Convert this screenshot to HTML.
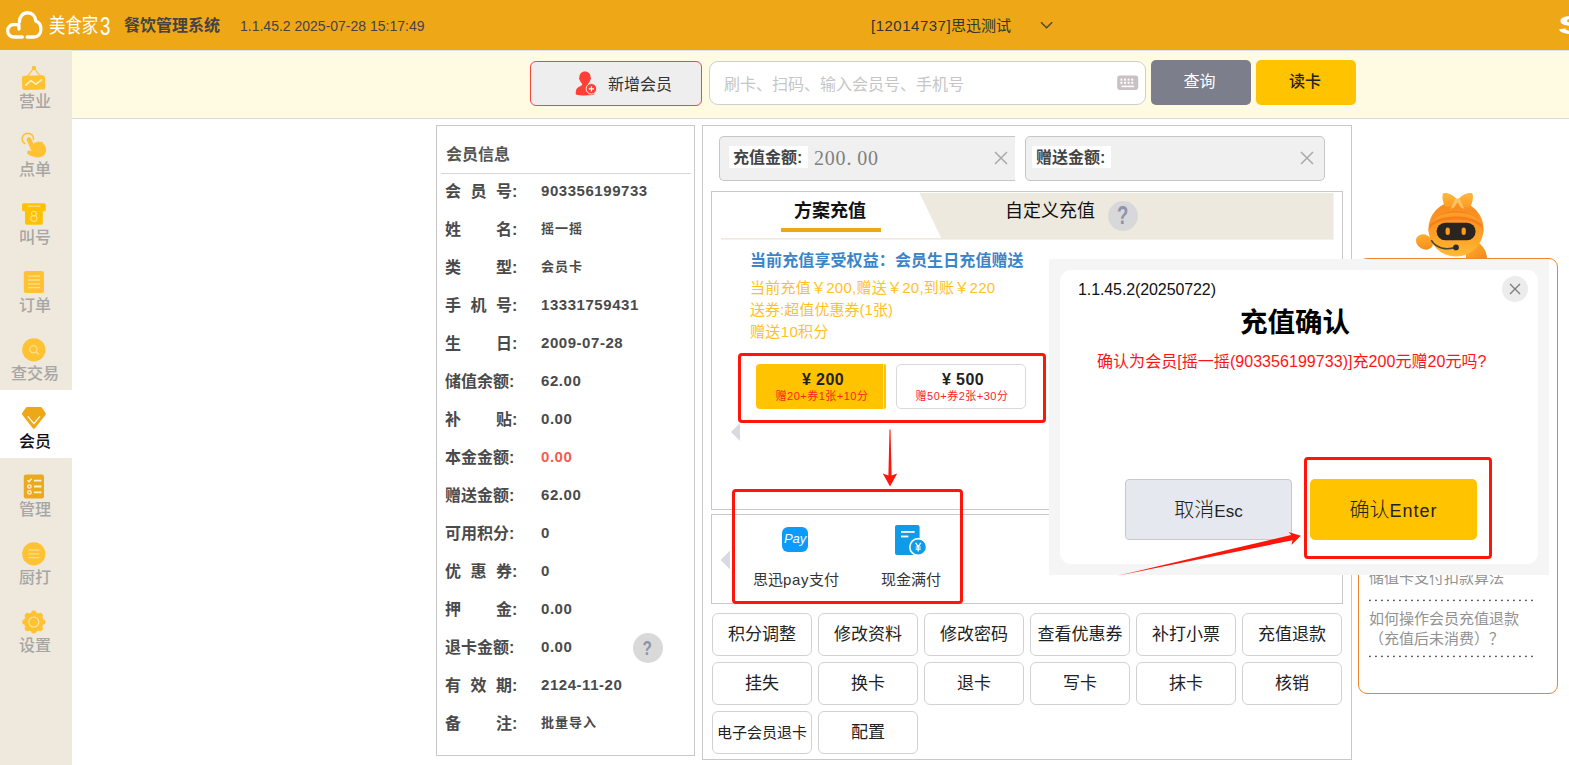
<!DOCTYPE html>
<html lang="zh-CN">
<head>
<meta charset="utf-8">
<title>美食家3 餐饮管理系统</title>
<style>
*{box-sizing:border-box;margin:0;padding:0}
html,body{width:1569px;height:765px;overflow:hidden;background:#fff}
body{position:relative;font-family:"Liberation Sans","Noto Sans CJK SC",sans-serif;color:#333;font-size:15px}
.abs{position:absolute}
.t{position:absolute;white-space:nowrap;line-height:1}
/* header */
#hdr{left:0;top:0;width:1569px;height:50px;background:#eea817}
/* sidebar */
#side{left:0;top:50px;width:72px;height:715px;background:#efe8dc}
.si{position:absolute;left:0;width:72px;height:68px}
.si .lb{position:absolute;left:0;width:70px;text-align:center;top:42px;font-size:16px;line-height:20px;color:#a6a6a6;font-weight:500}
.si.on{background:#fff}
.si.on .lb{color:#111;font-weight:500}
.si svg{position:absolute}
/* toolbar */
#tb{left:72px;top:50px;width:1497px;height:69px;background:#fffbe3;border-bottom:1px solid #d9d9d9}
/* member info */
#mi{left:436px;top:125px;width:259px;height:631px;border:1px solid #c9c9c9;background:#fff}
.ml{position:absolute;font-size:16px;font-weight:700;color:#4a4a4a;line-height:20px;white-space:nowrap}
.mv{position:absolute;letter-spacing:.55px;font-size:15px;font-weight:700;color:#4a4a4a;line-height:20px;white-space:nowrap}
.mv.s{font-size:13px;letter-spacing:1px}
.mv.r{color:#f55b52}
.jl{display:inline-flex;justify-content:space-between;width:67px;vertical-align:top}
/* right panel */
#rp{left:702px;top:125px;width:650px;height:635px;border:1px solid #c9c9c9;background:#fff}
.fb{position:absolute;width:100px;height:43px;border:1px solid #d2d2d2;border-radius:6px;background:#fff;text-align:center;line-height:41px;font-size:17px;color:#222;white-space:nowrap}
.yl{font-size:15px;line-height:20px;color:#ffc11f;letter-spacing:.25px}
.pm{text-align:center;font-size:16px;line-height:20px;font-weight:700;color:#222;letter-spacing:.4px}
.ps{text-align:center;font-size:11px;line-height:14px;color:#ff2222;letter-spacing:.5px}
.hp{font-size:15px;line-height:20px;color:#929292}
.dots{width:164px;height:1.4px;background:repeating-linear-gradient(90deg,#6a6a6a 0,#6a6a6a 1.2px,transparent 1.2px,transparent 5.45px)}
</style>
</head>
<body>
<div id="hdr" class="abs">
<svg class="abs" style="left:4px;top:9px" width="40.5" height="32" viewBox="0 0 42 32" preserveAspectRatio="none"><g fill="none" stroke="#fff" stroke-width="3.4" stroke-linecap="round" stroke-linejoin="round"><path d="M19 28 H10.5 C6.5 28 3.8 25.3 3.8 21.8 C3.8 18 6.8 15.3 11 15.6 L15.5 15.6 V20"/><path d="M16 13 C16 7.5 19.5 3.8 24.5 3.8 C29.3 3.8 32.6 7.2 32.9 12 C36.3 13.2 38.3 16.3 38.3 20 C38.3 24.6 35.2 28 30.6 28 H24"/></g></svg>
<div class="t" style="left:49px;top:14px;font-size:20.5px;line-height:24px;color:#fff;font-weight:400;transform:scaleX(.8);transform-origin:0 0">美食家</div>
<div class="t" style="left:99.5px;top:10.5px;font-size:26px;line-height:30px;color:#fff;transform:scaleX(.72);transform-origin:0 0">3</div>
<div class="t" style="left:124px;top:16px;font-size:16px;line-height:20px;color:#444;font-weight:700">餐饮管理系统</div>
<div class="t" style="left:240px;top:17px;font-size:14px;line-height:18px;color:#444">1.1.45.2 2025-07-28 15:17:49</div>
<div class="t" style="left:871px;top:16.5px;font-size:15px;line-height:18px;color:#333"><span style="letter-spacing:.5px">[12014737]</span>思迅测试</div>
<svg class="abs" style="left:1039px;top:20px" width="15" height="10" viewBox="0 0 15 10"><path d="M2 2.2 L7.6 7.8 L13.2 2.2" fill="none" stroke="#444" stroke-width="1.3"/></svg>
<div class="t" style="left:1557.5px;top:9.5px;font-size:26px;line-height:30px;color:#fff;font-weight:700;transform:scaleX(1.7);transform-origin:0 0">S</div>
</div>
<div id="side" class="abs">
<div class="si" style="top:0px"><svg style="left:20px;top:6px" width="28" height="36" viewBox="0 0 28 36"><path d="M13.9 12 L7.4 20.4 M13.9 12 L20.4 20.4" stroke="#ffc233" stroke-width="1.2" fill="none"/><circle cx="13.9" cy="12" r="2.2" fill="#ffc233"/><rect x="2" y="19.4" width="23.2" height="14.4" rx="2.6" fill="#ffc233" transform="rotate(-1.5 13.6 26.6)"/><path d="M5.3 29.6 L10.8 24.6 L15.9 28.2 L22.2 23.4" stroke="#fff0c4" stroke-width="1.5" fill="none" stroke-linejoin="round"/></svg><div class="lb">营业</div></div>
<div class="si" style="top:68px"><svg style="left:20px;top:14px" width="28" height="27" viewBox="0 0 28 27"><path d="M4.7 11.6 A5.6 5.6 0 1 1 13.4 7.4" stroke="#ffc233" stroke-width="1.5" fill="none" stroke-linecap="round"/><path d="M6.8 8.6 C6.2 6.4 7.6 5.2 9 5.3 C10.6 5.4 11.3 6.6 11.7 7.8 L13.6 12.2 C14 10.6 15.4 9.8 16.6 10.4 C17.2 9.2 19 9 19.8 10.2 C20.8 9.4 22.6 9.8 23 11.2 C25 12.6 26.2 15.4 26 18.6 C25.8 22.6 22.6 25.6 18.4 25.6 C14.4 25.6 11.6 24.2 8.2 22.6 C6.6 21.8 6.6 19.4 8.4 18.6 C9.6 18.2 10.6 18.6 11.6 19.2 Z" fill="#ffc233"/></svg><div class="lb">点单</div></div>
<div class="si" style="top:136px"><svg style="left:20px;top:16px" width="28" height="24" viewBox="0 0 28 24"><rect x="2" y="1.2" width="23.8" height="8" rx="1.8" fill="#ffc103"/><rect x="5" y="6" width="17.8" height="16.8" rx="1.8" fill="#ffc103"/><rect x="7.6" y="3.4" width="12.6" height="1.4" rx=".6" fill="#ffe08a"/><ellipse cx="13.9" cy="11.5" rx="2.5" ry="2.3" fill="none" stroke="#ffe08a" stroke-width="1.1"/><ellipse cx="13.9" cy="16.6" rx="3.1" ry="2.8" fill="none" stroke="#ffe08a" stroke-width="1.1"/></svg><div class="lb">叫号</div></div>
<div class="si" style="top:204px"><svg style="left:22px;top:16px" width="24" height="24" viewBox="0 0 24 24"><rect x="1.8" y="1" width="20.2" height="22" rx="2.2" fill="#ffc233"/><path d="M6 6.2 H18 M6 10 H18 M6 13.8 H18 M6 17.6 H18" stroke="#ffe08a" stroke-width="1.3"/></svg><div class="lb">订单</div></div>
<div class="si" style="top:272px"><svg style="left:21px;top:15px" width="26" height="26" viewBox="0 0 26 26"><circle cx="12.8" cy="12.8" r="11.6" fill="#ffc233"/><circle cx="12.4" cy="12.2" r="3.6" fill="none" stroke="#ffe08a" stroke-width="1.2"/><path d="M15.2 15 L17.6 17.4" stroke="#ffe08a" stroke-width="1.2" stroke-linecap="round"/></svg><div class="lb">查交易</div></div>
<div class="si on" style="top:340px"><svg style="left:20px;top:15px" width="28" height="26" viewBox="0 0 28 26"><path d="M7.2 2 H20.6 Q21.4 2 22 2.7 L25.6 8 Q26.2 9 25.4 9.9 L15 23.2 Q13.9 24.4 12.8 23.2 L2.4 9.9 Q1.6 9 2.2 8 L5.8 2.7 Q6.4 2 7.2 2 Z" fill="#eea817"/><path d="M7.8 11.4 L13.9 18.6 L20 11.4" fill="none" stroke="#fff" stroke-width="1.3"/></svg><div class="lb">会员</div></div>
<div class="si" style="top:408px"><svg style="left:22px;top:14.5px" width="24" height="26" viewBox="0 0 24 26"><rect x="1.8" y="1.4" width="20.2" height="24" rx="2.2" fill="#eba91f"/><path d="M5.4 7.2 L7 8.8 L9.6 5.8" fill="none" stroke="#fff3cf" stroke-width="1.4"/><path d="M11.9 7.6 H19.4 M11.9 13.5 H19.4 M11.9 19.4 H19.4" stroke="#fff3cf" stroke-width="1.9"/><circle cx="7.45" cy="13.5" r="1.7" fill="none" stroke="#fff3cf" stroke-width="1.3"/><circle cx="7.45" cy="19.4" r="1.7" fill="none" stroke="#fff3cf" stroke-width="1.3"/></svg><div class="lb">管理</div></div>
<div class="si" style="top:476px"><svg style="left:21px;top:15px" width="26" height="26" viewBox="0 0 26 26"><circle cx="12.8" cy="12.9" r="11.6" fill="#ffc233"/><path d="M7.2 9.2 H18.4 M7.2 12.9 H18.4 M7.2 16.6 H18.4" stroke="#ffe08a" stroke-width="1.3"/></svg><div class="lb">厨打</div></div>
<div class="si" style="top:544px"><svg style="left:20px;top:14px" width="28" height="28" viewBox="0 0 28 28"><g fill="#ffc233"><circle cx="13.8" cy="14" r="9.8"/><g id="gt"><rect x="11.2" y="2.4" width="5.2" height="5" rx="2"/><rect x="11.2" y="20.6" width="5.2" height="5" rx="2"/></g><use href="#gt" transform="rotate(45 13.8 14)"/><use href="#gt" transform="rotate(90 13.8 14)"/><use href="#gt" transform="rotate(135 13.8 14)"/></g><circle cx="13.8" cy="14" r="5" fill="none" stroke="#ffe9a8" stroke-width="1.1"/></svg><div class="lb">设置</div></div>
</div>
<div id="tb" class="abs">
<div class="abs" style="left:0;top:0;width:1497px;height:1px;background:#dfe1ea"></div>
<div class="abs" style="left:458px;top:11px;width:172px;height:45px;border:1px solid #f4473c;border-radius:6px;background:#eeeeee"></div>
<svg class="abs" style="left:502px;top:20px" width="26" height="27" viewBox="0 0 26 27"><path d="M11 1.6 C14.6 1.6 16.6 4 16.6 7.4 C17.2 7.6 17.2 9 16.4 9.6 C16 11.4 15.2 12.8 14.2 13.6 C14 14.6 14.4 15.2 15.4 15.6 C17.2 16.2 19 16.8 20 17.6 L20.4 24.6 C17 25.8 6 25.8 2.6 24.8 C1.8 24.6 1.6 24 1.7 23 C1.9 20 2.4 18.2 4.2 17.2 C5.6 16.4 7 16 7.8 15.2 C8.4 14.6 8.2 13.8 7.8 13.4 C6.8 12.6 6 11.2 5.6 9.6 C4.8 9 4.8 7.6 5.4 7.4 C5.4 4 7.4 1.6 11 1.6 Z" fill="#ff4036"/><circle cx="17.4" cy="18.8" r="5.3" fill="#ff4036" stroke="#eeeeee" stroke-width="1"/><path d="M17.4 16.2 V21.4 M14.8 18.8 H20" stroke="#fff" stroke-width="1.3"/></svg>
<div class="t" style="left:536px;top:24.5px;font-size:16px;line-height:20px;color:#333">新增会员</div>
<div class="abs" style="left:637px;top:11px;width:437px;height:44px;border:1px solid #cfcfcf;border-radius:9px;background:#fff"></div>
<div class="t" style="left:652px;top:24.5px;font-size:16px;line-height:20px;color:#c6c6c6">刷卡、扫码、输入会员号、手机号</div>
<svg class="abs" style="left:1044px;top:24px" width="24" height="18" viewBox="0 0 24 18"><rect x="1.2" y="1.6" width="21" height="14.4" rx="2.4" fill="#c9c1c4"/><g fill="#fff"><rect x="4.4" y="4.6" width="2" height="2"/><rect x="8" y="4.6" width="2" height="2"/><rect x="11.6" y="4.6" width="2" height="2"/><rect x="15.2" y="4.6" width="2" height="2"/><rect x="4.4" y="7.8" width="2" height="2"/><rect x="8" y="7.8" width="2" height="2"/><rect x="11.6" y="7.8" width="2" height="2"/><rect x="15.2" y="7.8" width="2" height="2"/><rect x="5.4" y="11.6" width="12.6" height="1.6"/></g></svg>
<div class="abs" style="left:1079px;top:10px;width:100px;height:45px;border-radius:5px;background:#7c7e8b;color:#fff;text-align:center;font-size:16px;line-height:43px;text-indent:-3px">查询</div>
<div class="abs" style="left:1184px;top:10px;width:100px;height:45px;border-radius:5px;background:#ffc300;color:#222;text-align:center;font-size:16px;line-height:43px;font-weight:500;text-indent:-2px">读卡</div>
</div>
<div id="mi" class="abs"></div>
<div class="ml" style="left:446px;top:145px;color:#555">会员信息</div>
<div class="abs" style="left:441px;top:173px;width:250px;height:1px;background:#d6d6d6"></div>
<div class="ml" style="left:445px;top:182px"><span class="jl"><span>会</span><span>员</span><span>号</span></span>:</div><div class="mv" style="left:541px;top:181px">903356199733</div>
<div class="ml" style="left:445px;top:220px"><span class="jl"><span>姓</span><span>名</span></span>:</div><div class="mv s" style="left:541px;top:219px">摇一摇</div>
<div class="ml" style="left:445px;top:258px"><span class="jl"><span>类</span><span>型</span></span>:</div><div class="mv s" style="left:541px;top:257px">会员卡</div>
<div class="ml" style="left:445px;top:296px"><span class="jl"><span>手</span><span>机</span><span>号</span></span>:</div><div class="mv" style="left:541px;top:295px">13331759431</div>
<div class="ml" style="left:445px;top:334px"><span class="jl"><span>生</span><span>日</span></span>:</div><div class="mv" style="left:541px;top:333px">2009-07-28</div>
<div class="ml" style="left:445px;top:372px">储值余额:</div><div class="mv" style="left:541px;top:371px">62.00</div>
<div class="ml" style="left:445px;top:410px"><span class="jl"><span>补</span><span>贴</span></span>:</div><div class="mv" style="left:541px;top:409px">0.00</div>
<div class="ml" style="left:445px;top:448px">本金金额:</div><div class="mv r" style="left:541px;top:447px">0.00</div>
<div class="ml" style="left:445px;top:486px">赠送金额:</div><div class="mv" style="left:541px;top:485px">62.00</div>
<div class="ml" style="left:445px;top:524px">可用积分:</div><div class="mv" style="left:541px;top:523px">0</div>
<div class="ml" style="left:445px;top:562px"><span class="jl"><span>优</span><span>惠</span><span>券</span></span>:</div><div class="mv" style="left:541px;top:561px">0</div>
<div class="ml" style="left:445px;top:600px"><span class="jl"><span>押</span><span>金</span></span>:</div><div class="mv" style="left:541px;top:599px">0.00</div>
<div class="ml" style="left:445px;top:638px">退卡金额:</div><div class="mv" style="left:541px;top:637px">0.00</div>
<div class="ml" style="left:445px;top:676px"><span class="jl"><span>有</span><span>效</span><span>期</span></span>:</div><div class="mv" style="left:541px;top:675px">2124-11-20</div>
<div class="ml" style="left:445px;top:714px"><span class="jl"><span>备</span><span>注</span></span>:</div><div class="mv s" style="left:541px;top:713px">批量导入</div>
<div class="abs" style="left:632.5px;top:632.5px;width:30px;height:30px;border-radius:15px;background:#d9d9d9;color:#8e92aa;font-weight:700;font-size:20px;line-height:31px;text-align:center"><span style="display:inline-block;transform:scaleX(.76)">?</span></div>
<div id="rp" class="abs"></div>
<div class="abs" style="left:719px;top:136px;width:296px;height:45px;border:1px solid #c6c6c6;border-right:none;border-radius:5px 0 0 5px;background:#f0f0f0"></div>
<div class="abs" style="left:729px;top:146px;width:79px;height:22px;background:#fff"></div>
<div class="t" style="left:733px;top:148px;font-size:16px;line-height:20px;font-weight:700;color:#444">充值金额:</div>
<div class="t" style="left:814px;top:146px;font-size:20px;line-height:24px;letter-spacing:.8px;color:#808080;font-family:'Liberation Serif','Noto Serif CJK SC',serif">200.<span style="margin-left:5px">00</span></div>
<svg class="abs" style="left:993px;top:150px" width="16" height="16" viewBox="0 0 16 16"><path d="M2 2 L14 14 M14 2 L2 14" stroke="#a9a9a9" stroke-width="1.5" fill="none"/></svg>
<div class="abs" style="left:1025px;top:136px;width:300px;height:45px;border:1px solid #c6c6c6;border-radius:5px;background:#f0f0f0"></div>
<div class="abs" style="left:1032px;top:146px;width:79px;height:22px;background:#fff"></div>
<div class="t" style="left:1036px;top:148px;font-size:16px;line-height:20px;font-weight:700;color:#444">赠送金额:</div>
<svg class="abs" style="left:1299px;top:150px" width="16" height="16" viewBox="0 0 16 16"><path d="M2 2 L14 14 M14 2 L2 14" stroke="#a9a9a9" stroke-width="1.5" fill="none"/></svg>
<div class="abs" style="left:711px;top:191px;width:632px;height:319px;border:1px solid #c9c9c9;background:#fff"></div>
<svg class="abs" style="left:712px;top:193px" width="622" height="47" viewBox="0 0 622 47"><path d="M207.5 0 H621.5 V45.5 H229.5 Z" fill="#eee9de"/><rect x="9" y="45" width="612.5" height="1.6" fill="#eee9de"/><rect x="69" y="35" width="100" height="4" fill="#eea817"/></svg>
<div class="t" style="left:794px;top:199px;font-size:18px;line-height:24px;font-weight:700;color:#111">方案充值</div>
<div class="t" style="left:1005px;top:199px;font-size:18px;line-height:24px;color:#111">自定义充值</div>
<div class="abs" style="left:1107.5px;top:200.5px;width:30px;height:30px;border-radius:15px;background:#d8d8db;color:#8f93ab;font-weight:700;font-size:25px;line-height:28px;text-align:center"><span style="display:inline-block;transform:scaleX(.74)">?</span></div>
<div class="t" style="left:750px;top:251px;font-size:16px;line-height:20px;font-weight:700;letter-spacing:.1px;color:#3a85c9">当前充值享受权益：会员生日充值赠送</div>
<div class="t yl" style="left:750px;top:278px">当前充值￥200,赠送￥20,到账￥220</div>
<div class="t yl" style="left:750px;top:300px;letter-spacing:.05px">送券:超值优惠券(1张)</div>
<div class="t yl" style="left:750px;top:322px;letter-spacing:.35px">赠送10积分</div>
<div class="abs" style="left:756px;top:364px;width:127px;height:45px;border-radius:4px 0 0 4px;background:#ffc300"></div>
<div class="abs" style="left:883px;top:364px;width:1px;height:45px;background:#ffe48a"></div>
<div class="abs" style="left:884px;top:364px;width:2px;height:45px;border-radius:0 3px 3px 0;background:#ffc300"></div>
<div class="abs" style="left:896px;top:364px;width:130px;height:45px;border:1px solid #d9d9d9;border-radius:5px;background:#fff"></div>
<div class="t pm" style="left:758px;top:370px;width:130px">¥ 200</div>
<div class="t ps" style="left:757px;top:389px;width:130px">赠20+券1张+10分</div>
<div class="t pm" style="left:898px;top:370px;width:130px">¥ 500</div>
<div class="t ps" style="left:897px;top:389px;width:130px">赠50+券2张+30分</div>
<svg class="abs" style="left:729px;top:421px" width="12" height="22" viewBox="0 0 12 22"><path d="M2 11 L11 2 V20 Z" fill="#d9dae1"/></svg>
<div class="abs" style="left:711px;top:514px;width:632px;height:90px;border:1px solid #c9c9c9;background:#fff"></div>
<svg class="abs" style="left:719px;top:548px" width="12" height="24" viewBox="0 0 12 24"><path d="M1.6 12 L11 2.4 V21.6 Z" fill="#d9dae1"/></svg>
<div class="abs" style="left:782px;top:527px;width:26px;height:25px;border-radius:6px;background:#0d9bfb"></div>
<div class="t" style="left:782px;top:531px;width:26px;text-align:center;font-size:13px;line-height:16px;color:#fff;font-style:italic;letter-spacing:-.1px">Pay</div>
<svg class="abs" style="left:893px;top:523px" width="36" height="34" viewBox="0 0 36 34"><path d="M4 2 H24.4 Q26.6 2 26.6 4.2 V32 H4 Q2 32 2 30 V4 Q2 2 4 2 Z" fill="#0e9be8"/><rect x="8" y="8" width="13.6" height="1.8" fill="#fff"/><rect x="8" y="12.6" width="7.4" height="1.8" fill="#fff"/><circle cx="25.2" cy="24" r="8.4" fill="#0e9be8" stroke="#fff" stroke-width="1.6"/><path d="M22.6 19.8 L25.2 23.6 L27.8 19.8 M25.2 23.6 V28.6 M22.6 24 H27.8 M22.6 26.2 H27.8" stroke="#fff" stroke-width="1.2" fill="none"/></svg>
<div class="t" style="left:746px;top:570px;width:100px;text-align:center;font-size:15px;line-height:20px;color:#333">思迅<span style="letter-spacing:.6px">pay</span>支付</div>
<div class="t" style="left:861px;top:570px;width:100px;text-align:center;font-size:15px;line-height:20px;color:#333">现金满付</div>
<div class="fb" style="left:712px;top:613px">积分调整</div>
<div class="fb" style="left:818px;top:613px">修改资料</div>
<div class="fb" style="left:924px;top:613px">修改密码</div>
<div class="fb" style="left:1030px;top:613px">查看优惠券</div>
<div class="fb" style="left:1136px;top:613px">补打小票</div>
<div class="fb" style="left:1242px;top:613px">充值退款</div>
<div class="fb" style="left:712px;top:662px">挂失</div>
<div class="fb" style="left:818px;top:662px">换卡</div>
<div class="fb" style="left:924px;top:662px">退卡</div>
<div class="fb" style="left:1030px;top:662px">写卡</div>
<div class="fb" style="left:1136px;top:662px">抹卡</div>
<div class="fb" style="left:1242px;top:662px">核销</div>
<div class="fb" style="left:712px;top:711px;font-size:15px">电子会员退卡</div>
<div class="fb" style="left:818px;top:711px">配置</div>
<div class="abs" style="left:738px;top:353px;width:307.5px;height:69.5px;border:3px solid #ff1509;border-radius:4px"></div>
<div class="abs" style="left:732px;top:489px;width:230.5px;height:114.5px;border:3px solid #ff1509;border-radius:4px"></div>
<svg class="abs" style="left:880px;top:428px" width="20" height="60" viewBox="0 0 20 60"><path d="M9.5 1.5 L10.5 1.5 L11.6 47.6 L17.2 45.4 L10 58.4 L2.8 45.4 L8.4 47.6 Z" fill="#ff1509"/></svg>
<!-- help panel -->
<div class="abs" style="left:1358px;top:258px;width:200px;height:436px;border:1.3px solid #f0862c;border-radius:9px;background:#fff"></div>
<div class="t hp" style="left:1369px;top:568px">储值卡支付扣款算法</div>
<svg class="abs" style="left:1369px;top:599px" width="166" height="3" viewBox="0 0 166 3" fill="#111"><rect x="0.3" y="0.7" width="1.3" height="1.4"/><rect x="6.3" y="0.7" width="1.3" height="1.4"/><rect x="12.3" y="0.7" width="1.3" height="1.4"/><rect x="18.3" y="0.7" width="1.3" height="1.4"/><rect x="24.3" y="0.7" width="1.3" height="1.4"/><rect x="30.3" y="0.7" width="1.3" height="1.4"/><rect x="36.3" y="0.7" width="1.3" height="1.4"/><rect x="42.3" y="0.7" width="1.3" height="1.4"/><rect x="48.3" y="0.7" width="1.3" height="1.4"/><rect x="54.3" y="0.7" width="1.3" height="1.4"/><rect x="60.3" y="0.7" width="1.3" height="1.4"/><rect x="66.3" y="0.7" width="1.3" height="1.4"/><rect x="72.3" y="0.7" width="1.3" height="1.4"/><rect x="78.3" y="0.7" width="1.3" height="1.4"/><rect x="84.3" y="0.7" width="1.3" height="1.4"/><rect x="90.3" y="0.7" width="1.3" height="1.4"/><rect x="96.3" y="0.7" width="1.3" height="1.4"/><rect x="102.3" y="0.7" width="1.3" height="1.4"/><rect x="108.3" y="0.7" width="1.3" height="1.4"/><rect x="114.3" y="0.7" width="1.3" height="1.4"/><rect x="120.3" y="0.7" width="1.3" height="1.4"/><rect x="126.3" y="0.7" width="1.3" height="1.4"/><rect x="132.3" y="0.7" width="1.3" height="1.4"/><rect x="138.3" y="0.7" width="1.3" height="1.4"/><rect x="144.3" y="0.7" width="1.3" height="1.4"/><rect x="150.3" y="0.7" width="1.3" height="1.4"/><rect x="156.3" y="0.7" width="1.3" height="1.4"/><rect x="162.3" y="0.7" width="1.3" height="1.4"/></svg>
<div class="t hp" style="left:1369px;top:609px">如何操作会员充值退款</div>
<div class="t hp" style="left:1369px;top:629px">（充值后未消费）？</div>
<svg class="abs" style="left:1369px;top:655px" width="166" height="3" viewBox="0 0 166 3" fill="#111"><rect x="0.3" y="0.7" width="1.3" height="1.4"/><rect x="6.3" y="0.7" width="1.3" height="1.4"/><rect x="12.3" y="0.7" width="1.3" height="1.4"/><rect x="18.3" y="0.7" width="1.3" height="1.4"/><rect x="24.3" y="0.7" width="1.3" height="1.4"/><rect x="30.3" y="0.7" width="1.3" height="1.4"/><rect x="36.3" y="0.7" width="1.3" height="1.4"/><rect x="42.3" y="0.7" width="1.3" height="1.4"/><rect x="48.3" y="0.7" width="1.3" height="1.4"/><rect x="54.3" y="0.7" width="1.3" height="1.4"/><rect x="60.3" y="0.7" width="1.3" height="1.4"/><rect x="66.3" y="0.7" width="1.3" height="1.4"/><rect x="72.3" y="0.7" width="1.3" height="1.4"/><rect x="78.3" y="0.7" width="1.3" height="1.4"/><rect x="84.3" y="0.7" width="1.3" height="1.4"/><rect x="90.3" y="0.7" width="1.3" height="1.4"/><rect x="96.3" y="0.7" width="1.3" height="1.4"/><rect x="102.3" y="0.7" width="1.3" height="1.4"/><rect x="108.3" y="0.7" width="1.3" height="1.4"/><rect x="114.3" y="0.7" width="1.3" height="1.4"/><rect x="120.3" y="0.7" width="1.3" height="1.4"/><rect x="126.3" y="0.7" width="1.3" height="1.4"/><rect x="132.3" y="0.7" width="1.3" height="1.4"/><rect x="138.3" y="0.7" width="1.3" height="1.4"/><rect x="144.3" y="0.7" width="1.3" height="1.4"/><rect x="150.3" y="0.7" width="1.3" height="1.4"/><rect x="156.3" y="0.7" width="1.3" height="1.4"/><rect x="162.3" y="0.7" width="1.3" height="1.4"/></svg>
<!-- mascot -->
<svg class="abs" style="left:1410px;top:188px" width="84" height="72" viewBox="0 0 84 72">
<defs>
<linearGradient id="gh" x1="0" y1="0" x2="0" y2="1"><stop offset="0" stop-color="#f8891f"/><stop offset=".55" stop-color="#fc9c25"/><stop offset="1" stop-color="#ffbb35"/></linearGradient>
<linearGradient id="gb" x1="0" y1="0" x2="0" y2="1"><stop offset="0" stop-color="#ffb93e"/><stop offset="1" stop-color="#fb9a25"/></linearGradient>
<linearGradient id="ga" x1="0" y1="0" x2="1" y2="1"><stop offset="0" stop-color="#ffb52e"/><stop offset="1" stop-color="#f5861c"/></linearGradient>
</defs>
<path d="M56 53 C66 50 76 58 77 70 L56 70 Z" fill="url(#ga)"/>
<ellipse cx="14.5" cy="54" rx="9" ry="7.2" transform="rotate(28 14.5 54)" fill="url(#ga)"/>
<circle cx="46" cy="41" r="27.6" fill="url(#gh)"/>
<path d="M18.6 44 C19 31 30 23.4 46 23.4 C62 23.4 73 31 73.4 44 C72 36 62 31.6 46 31.6 C30 31.6 20 36 18.6 44 Z" fill="#f57f1b"/>
<path d="M20 37 C24 28 34 24.6 46 24.6 C58 24.6 68 28 72 37 C66 30.6 57 28.6 46 28.6 C35 28.6 26 30.6 20 37 Z" fill="#fb9c2c"/>
<rect x="26.6" y="34.8" width="39" height="17.4" rx="8.6" fill="#2b2522"/>
<rect x="35.6" y="39.6" width="4.2" height="7.4" rx="2.1" fill="#ff9b1c"/>
<rect x="51.6" y="39.6" width="4.2" height="7.4" rx="2.1" fill="#ff9b1c"/>
<path d="M21.6 52.6 C26 60 36 62.4 45 59.6" fill="none" stroke="#474340" stroke-width="1.6" stroke-linecap="round"/>
<circle cx="46" cy="59.4" r="2.9" fill="#2e2b2a"/>
<path d="M47.5 12.4 C43 6 36 4 33 5.4 C31.6 9 33 16 36 19.4 C41 19 45.4 16.4 47.5 12.4 Z" fill="url(#gb)"/>
<path d="M47.5 12.4 C52 6 59 4 62.4 5.4 C63.8 9 62.4 16.6 59 20 C54 19.6 49.6 16.4 47.5 12.4 Z" fill="url(#gb)"/>
<path d="M45.5 10.4 H49.5 L54.5 21 L51 19.4 L47.5 14.4 L44 19.4 L40.5 21 Z" fill="#ffc35c"/>
</svg>
<!-- dialog -->
<div class="abs" style="left:1049px;top:259px;width:500px;height:316px;background:#f5f5f5"></div>
<div class="abs" style="left:1060px;top:270px;width:478px;height:294px;border-radius:11px;background:#fff"></div>
<div class="t" style="left:1078px;top:280px;font-size:16px;line-height:20px;letter-spacing:-.1px;color:#111">1.1.45.2(20250722)</div>
<div class="abs" style="left:1502px;top:276px;width:26px;height:26px;border-radius:13px;background:#ececec"></div>
<svg class="abs" style="left:1508px;top:282px" width="14" height="14" viewBox="0 0 14 14"><path d="M2 2 L12 12 M12 2 L2 12" stroke="#7d7d7d" stroke-width="1.4" fill="none"/></svg>
<div class="t" style="left:1240px;top:305px;font-size:27.5px;line-height:36px;font-weight:700;color:#000">充值确认</div>
<div class="t" style="left:1097px;top:352px;font-size:16px;line-height:20px;letter-spacing:.05px;color:#ff1414">确认为会员[摇一摇(903356199733)]充200元赠20元吗?</div>
<div class="abs" style="left:1125px;top:479px;width:167px;height:61px;border:1px solid #c9c9c9;border-radius:4px;background:#e6e8ef;text-align:center;font-size:20px;line-height:60px;color:#222;font-weight:300">取消<span style="font-size:17px;font-weight:400">Esc</span></div>
<div class="abs" style="left:1310px;top:479px;width:167px;height:61px;border-radius:5px;background:#ffc300;text-align:center;font-size:20px;line-height:62px;color:#222;font-weight:300">确认<span style="font-size:18px;font-weight:400;letter-spacing:1px">Enter</span></div>
<div class="abs" style="left:1304px;top:457px;width:188px;height:102px;border:3px solid #ff1509;border-radius:4px"></div>
<svg class="abs" style="left:1110px;top:528px" width="200" height="52" viewBox="0 0 200 52"><path d="M7.5 47.7 L181.2 7 L178.6 3.9 L190.8 7.7 L181.4 17 L182.6 12.2 Z" fill="#ff1509"/></svg>
</body>
</html>
